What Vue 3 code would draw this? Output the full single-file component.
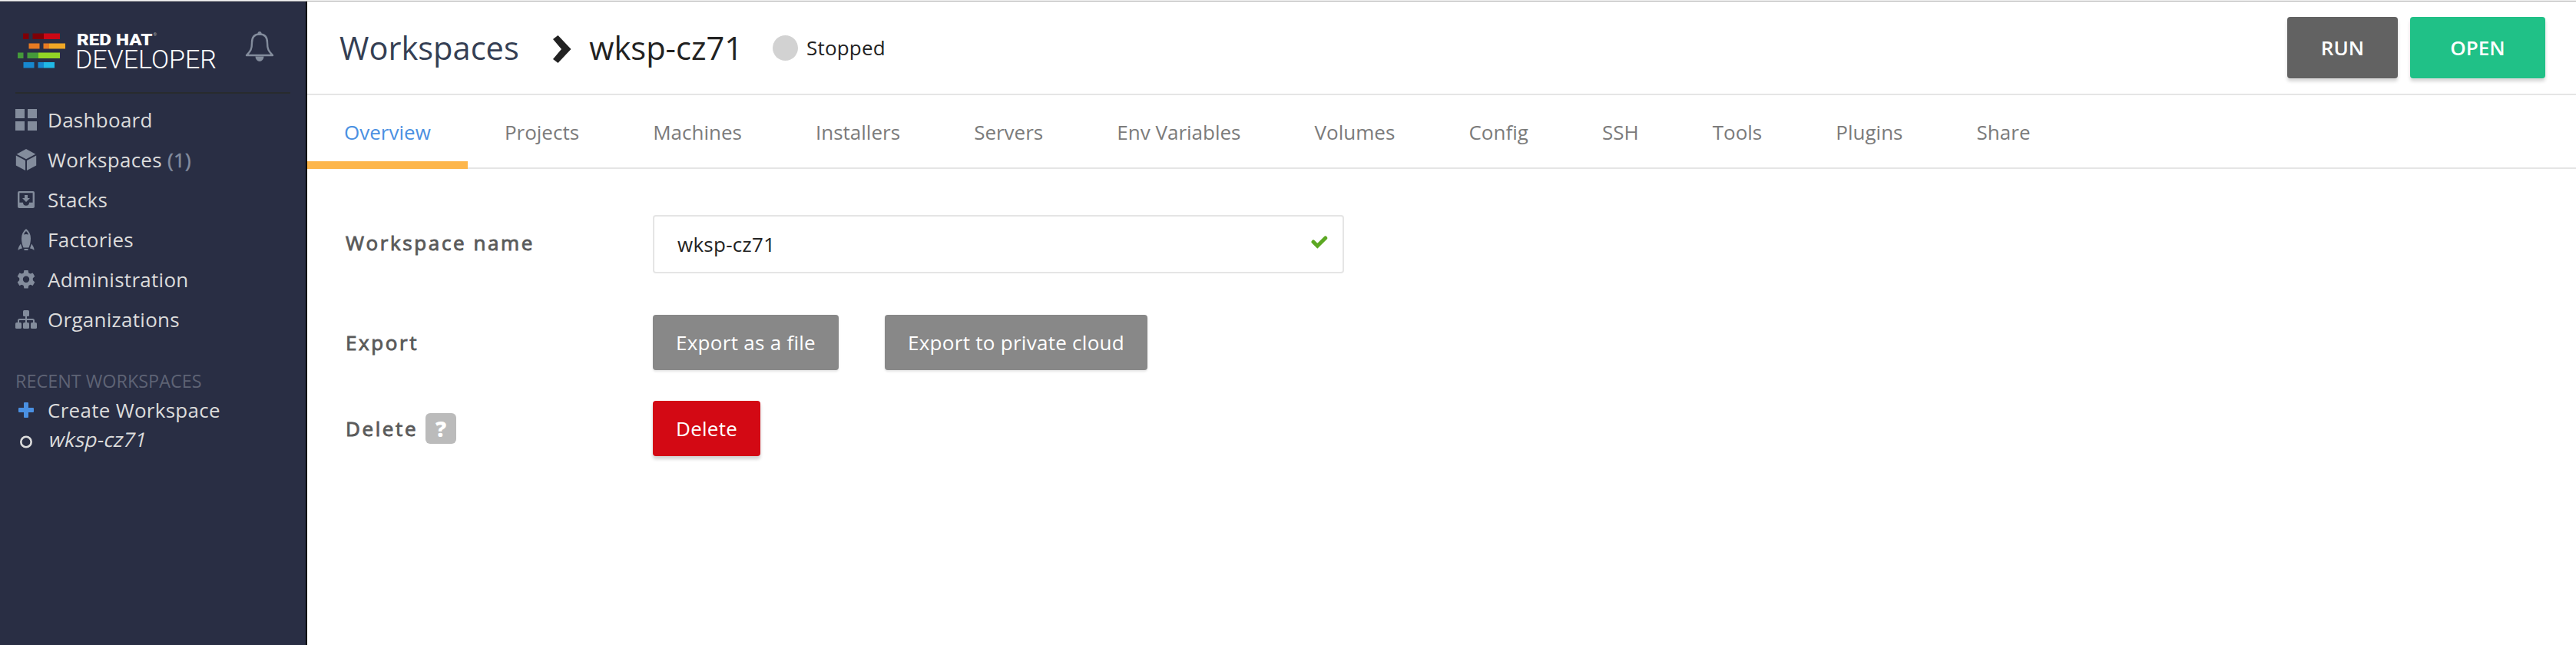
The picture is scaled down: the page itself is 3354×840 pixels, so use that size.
<script setup>
const nav = [
  { id: 'dashboard', label: 'Dashboard' },
  { id: 'workspaces', label: 'Workspaces', count: '(1)' },
  { id: 'stacks', label: 'Stacks' },
  { id: 'factories', label: 'Factories' },
  { id: 'admin', label: 'Administration' },
  { id: 'orgs', label: 'Organizations' },
]
const tabs = ['Overview', 'Projects', 'Machines', 'Installers', 'Servers', 'Env Variables', 'Volumes', 'Config', 'SSH', 'Tools', 'Plugins', 'Share']
</script>

<template>
  <div class="app">
    <aside class="sidebar">
      <div class="brand">
        <svg class="logo" width="286" height="64" viewBox="0 29 286 64">
          <path fill="#7f0007" d="M30 43.500h7.500v7.500h-7.500zM42.500 43.500h14.500v7.500h-14.500z" /><path fill="#cb0815" d="M57 43.500h21v7.500h-21z" />
          <path fill="#e77a22" d="M37.500 56.500h14v7h-14zM56.500 56.500h7.500v7h-7.500z" /><path fill="#f0a726" d="M64 56.500h21v7h-21z" />
          <path fill="#459a3a" d="M23 68.500h7.500v7.500h-7.500zM35.500 68.500h14.500v7.500h-14.500z" /><path fill="#92d526" d="M50 68.500h28v7.500h-28z" />
          <path fill="#1788cf" d="M30.500 81h14v7.500h-14zM49.500 81h7.500v7.500h-7.500z" /><path fill="#20b9e6" d="M57 81h14v7.500h-14z" />
          <text class="logo-top" x="100" y="59" textLength="98.500" lengthAdjust="spacingAndGlyphs">RED HAT</text>
          <text class="logo-reg" x="199.500" y="47">®</text>
          <text class="logo-bottom" x="98" y="89" textLength="184" lengthAdjust="spacingAndGlyphs">DEVELOPER</text>
        </svg>
        <svg class="bell" width="40" height="44" viewBox="0 0 40 44">
          <circle cx="20" cy="4.500" r="2.500" fill="#838c9c" />
          <path d="M20 5.500C12.500 5.500 10 10.500 10 16.500C10 25 8.500 27 3 33H37C31.500 27 30 25 30 16.500C30 10.500 27.500 5.500 20 5.500Z" fill="none" stroke="#838c9c" stroke-width="2.400" stroke-linejoin="round" />
          <path d="M14.500 34.500a5.500 6.500 0 0 0 11 0z" fill="#838c9c" />
        </svg>
      </div>
      <nav class="nav">
        <div v-for="n in nav" :key="n.id" class="nav-row">
          <svg class="ico" width="28" height="28" viewBox="0 0 28 28" fill="#838c9c">
            <path v-if="n.id === 'dashboard'" d="M0 0h12v12H0zM16 0h12v12H16zM0 16h12v12H0zM16 16h12v12H16z" />
            <path v-else-if="n.id === 'workspaces'" d="M14 0L26.300 6.700 14 13.200 1.700 6.700zM.8 8.600L13 15v13L.8 21.500zM27.200 8.600L15 15v13l12.200-6.500z" />
            <path v-else-if="n.id === 'stacks'" fill-rule="evenodd" d="M5 3h18a2 2 0 0 1 2 2v18a2 2 0 0 1-2 2H5a2 2 0 0 1-2-2V5a2 2 0 0 1 2-2zM5.400 5.200v12.500h4.600a4 4 0 0 0 8 0h4.600V5.200zM12 8h4v4h3l-5 5-5-5h3z" />
            <path v-else-if="n.id === 'factories'" fill-rule="evenodd" d="M14 0c4 3 6 7.500 6 12.500 0 4.500-1 8.500-2.500 12h-7C9 21 8 17 8 12.500 8 7.500 10 3 14 0zM11 7.500c2-.8 4-.8 6 0-.5-1.800-1.500-3.300-3-4.500-1.500 1.200-2.500 2.700-3 4.500zM7 19.500l2 6c-2 .3-4 1-5.500 2.500 0-3.500 1.500-6 3.500-8.500zM21 19.500l-2 6c2 .3 4 1 5.500 2.500 0-3.500-1.500-6-3.500-8.500zM11.500 26h5v2h-5z" />
            <path v-else-if="n.id === 'admin'" fill-rule="evenodd" d="M11.400 2h5.200l.7 3.400 2.200 1.200 3.200-1.100 2.600 4.500-2.500 2.300v2.800l2.500 2.300-2.600 4.500-3.200-1.100-2.200 1.200-.7 3.500h-5.200l-.7-3.500-2.200-1.200-3.200 1.100-2.600-4.500 2.500-2.300v-2.800L2.700 10l2.600-4.500 3.200 1.100 2.200-1.200zM14 9.500a4.200 4.200 0 1 0 0 8.400 4.200 4.200 0 0 0 0-8.400z" />
            <g v-else>
              <rect x="10" y="2" width="8" height="8" rx="1.500" /><rect x="0" y="18" width="8" height="8" rx="1.500" /><rect x="10" y="18" width="8" height="8" rx="1.500" /><rect x="20" y="18" width="8" height="8" rx="1.500" />
              <path d="M14 9v10M4 19v-3.500a1.500 1.500 0 0 1 1.500-1.500h17a1.500 1.500 0 0 1 1.500 1.500V19" fill="none" stroke="#838c9c" stroke-width="2" />
            </g>
          </svg>
          <span class="nav-label">{{ n.label }}</span>
          <span v-if="n.count" class="count">{{ n.count }}</span>
        </div>
      </nav>
      <div class="recent-title">RECENT WORKSPACES</div>
      <div class="recent-row">
        <svg class="ico" width="28" height="28" viewBox="0 0 28 28"><path fill="#4a90e2" d="M12 4h4a1 1 0 0 1 1 1v6h6a1 1 0 0 1 1 1v4a1 1 0 0 1-1 1h-6v6a1 1 0 0 1-1 1h-4a1 1 0 0 1-1-1v-6H5a1 1 0 0 1-1-1v-4a1 1 0 0 1 1-1h6V5a1 1 0 0 1 1-1z" /></svg>
        <span class="nav-label">Create Workspace</span>
      </div>
      <div class="recent-row">
        <svg class="ico" width="28" height="28" viewBox="0 0 28 28"><circle cx="14" cy="17.500" r="6.700" fill="none" stroke="#dcdcdc" stroke-width="2.600" /></svg>
        <span class="nav-label slanted">wksp-cz71</span>
      </div>
    </aside>
    <main class="main">
      <header class="header">
        <span class="crumb">Workspaces</span>
        <svg class="chev" width="24" height="36" viewBox="0 0 24 36"><path fill="#222" d="M6.500 0L23.500 18 6.500 36 0 31 11 18 0 5z" /></svg>
        <span class="crumb current">wksp-cz71</span>
        <span class="dot"></span>
        <span class="status">Stopped</span>
        <div class="actions">
          <button class="btn-top run">RUN</button>
          <button class="btn-top open">OPEN</button>
        </div>
      </header>
      <div class="tabs">
        <div v-for="(t, i) in tabs" :key="t" class="tab" :class="{ active: i === 0 }"><span>{{ t }}</span></div>
      </div>
      <section class="form">
        <div class="row name-row">
          <div class="label">Workspace name</div>
          <div class="input">
            <span>wksp-cz71</span>
            <svg width="22" height="18" viewBox="0 0 22 18"><path d="M3 8L8.300 13.300L18.700 3" fill="none" stroke="#5ca823" stroke-width="5" stroke-linecap="round" /></svg>
          </div>
        </div>
        <div class="row export-row">
          <div class="label">Export</div>
          <button class="btn">Export as a file</button>
          <button class="btn second">Export to private cloud</button>
        </div>
        <div class="row">
          <div class="label">Delete<span class="help">?</span></div>
          <button class="btn danger">Delete</button>
        </div>
      </section>
    </main>
  </div>
</template>

<style scoped>
.app { display: flex; height: 840px; box-sizing: border-box; border-top: 1px solid #f4f4f4; padding-top: 1px; font-family: "Open Sans", sans-serif; font-size: 26px; background: linear-gradient(#b0b0b0 0 1px, #fff 1px) padding-box; overflow: hidden; }
.sidebar { width: 398px; flex: none; background: #292e44; border-right: 2px solid #000; }
.brand { height: 118px; margin: 0 20px 0 0; display: flex; align-items: center; position: relative; }
.brand::after { content: ""; position: absolute; left: 20px; right: 0; bottom: -2px; height: 2px; background: #282b2e; }
.logo { overflow: visible; }
.bell { margin-left: 32px; }
.logo-top { font: 900 21px Roboto, sans-serif; fill: #fff; }
.logo-reg { font: 6px Roboto, sans-serif; fill: #aaa; }
.logo-bottom { font: 300 34px Roboto, sans-serif; fill: #fff; }
.nav { padding-top: 10px; }
.nav-row { height: 52px; display: flex; align-items: center; }
.ico { margin: 0 14px 0 20px; flex: none; }
.nav-label, .count { color: #dcdcdc; white-space: nowrap; letter-spacing: .28px; }
.count { color: #838c9f; margin-left: 7px; font-weight: 500; -webkit-text-stroke: .5px #838c9f; }
.recent-title { height: 38px; line-height: 38px; margin-top: 35px; padding-left: 20px; font-size: 23.4px; color: #5e6375; white-space: nowrap; }
.recent-row { height: 38px; display: flex; align-items: center; }
.slanted { transform: skewX(-13deg); transform-origin: 50% 78%; }
.main { flex: 1; min-width: 0; }
.header { height: 120px; display: flex; align-items: center; border-bottom: 2px solid #e5e5e5; padding: 0 40px 0 42px; }
.crumb { font-size: 41.6px; color: #353f54; white-space: nowrap; }
.current { color: #222; }
.chev { margin: 4px 23.5px 0 44px; }
.dot { width: 33px; height: 33px; border-radius: 50%; background: #d2d2d2; margin-left: 39px; }
.status { margin-left: 11px; color: #222; letter-spacing: .2px; }
.actions { margin-left: auto; display: flex; gap: 16px; }
.btn-top { border: 0; height: 80px; width: 144px; border-radius: 4px; color: #fff; font: 600 26px "Open Sans", sans-serif; box-shadow: 0 4px 4px rgba(0,0,0,.16); padding: 0; }
.run { background: #626262; }
.open { background: #20c187; width: 176px; }
.tabs { height: 94px; display: flex; border-bottom: 2px solid #e5e5e5; }
.tab { padding: 0 48.05px; line-height: 96px; height: 96px; box-sizing: border-box; color: #7b7b7b; white-space: nowrap; }
.active { color: #4a90e2; box-shadow: inset 0 -10px #fdb64b; }
.form { padding: 60px 0 0 50px; }
.row { display: flex; align-items: center; }
.name-row { height: 76px; }
.export-row { margin: 54px 0 40px; }
.label { width: 400px; color: #5a5a5a; -webkit-text-stroke: .9px #5a5a5a; letter-spacing: 2.6px; display: flex; align-items: center; white-space: nowrap; }
.name-row .label { margin-top: -4px; }
.input { width: 900px; height: 76px; box-sizing: border-box; border: 2px solid #e5e5e5; border-radius: 4px; display: flex; align-items: center; justify-content: space-between; padding: 0 19px 0 30px; color: #222; letter-spacing: .28px; }
.input svg { margin-top: -4px; }
.btn { border: 0; height: 72px; border-radius: 4px; padding: 0 30px; background: #888; color: #fff; font: 26px "Open Sans", sans-serif; letter-spacing: .28px; box-shadow: 0 2px 3px rgba(0,0,0,.1); white-space: nowrap; }
.second { margin-left: 60px; }
.danger { background: #d30914; box-shadow: 0 4px 4px rgba(0,0,0,.18); }
.help { width: 40px; height: 40px; line-height: 40px; margin-left: 10px; background: #bbb; border-radius: 6px; color: #fff; font-size: 28px; font-weight: 800; -webkit-text-stroke: 0; letter-spacing: 0; text-align: center; }
</style>
